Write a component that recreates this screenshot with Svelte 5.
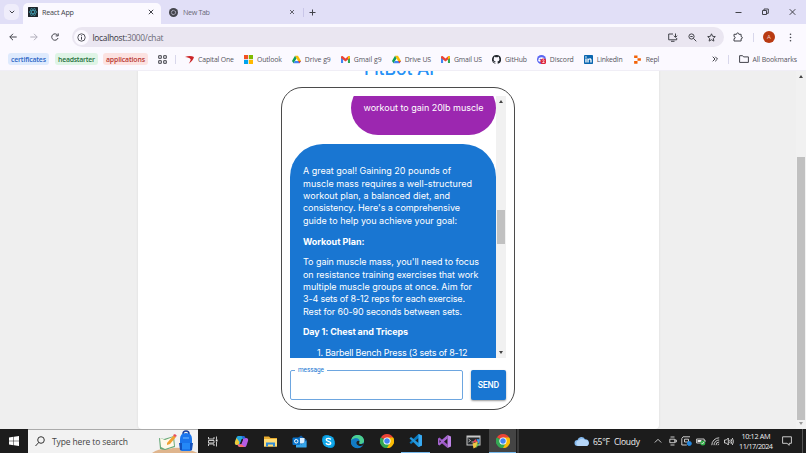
<script>
  // Spreads a label's letters so that it occupies the given width.
  function fit(node, width) {
    const natural = node.getBoundingClientRect().width;
    const count = node.textContent.length - 1;
    if (count > 0) node.style.letterSpacing = `${(width - natural) / count}px`;
    node.style.marginRight = `${-(width - natural) / count}px`;
  }

  const groups = [
    { name: 'certificates', w: 35, box: 41, gap: 6, kind: 'blue' },
    { name: 'headstarter', w: 37, box: 43, gap: 5, kind: 'green' },
    { name: 'applications', w: 39, box: 45, gap: 10, kind: 'red' }
  ];

  const bookmarks = [
    { icon: 'capital', name: 'Capital One', w: 36 },
    { icon: 'outlook', name: 'Outlook', w: 25 },
    { icon: 'drive', name: 'Drive g9', w: 26 },
    { icon: 'gmail', name: 'Gmail g9', w: 28 },
    { icon: 'drive', name: 'Drive US', w: 26.5 },
    { icon: 'gmail', name: 'Gmail US', w: 28 },
    { icon: 'github', name: 'GitHub', w: 22 },
    { icon: 'discord', name: 'Discord', w: 24 },
    { icon: 'linkedin', name: 'LinkedIn', w: 26 },
    { icon: 'repl', name: 'Repl', w: 13.5 }
  ];

  const blocks = [
    { lines: [
      ['A great goal! Gaining 20 pounds of', 148],
      ['muscle mass requires a well-structured', 169],
      ['workout plan, a balanced diet, and', 147],
      ["consistency. Here's a comprehensive", 157],
      ['guide to help you achieve your goal:', 154]
    ] },
    { bold: true, lines: [['Workout Plan:', 61.5]] },
    { lines: [
      ["To gain muscle mass, you'll need to focus", 176],
      ['on resistance training exercises that work', 175.5],
      ['multiple muscle groups at once. Aim for', 169],
      ['3-4 sets of 8-12 reps for each exercise.', 162],
      ['Rest for 60-90 seconds between sets.', 159]
    ] },
    { bold: true, lines: [['Day 1: Chest and Triceps', 105]] },
    { list: true, lines: [['1. Barbell Bench Press (3 sets of 8-12', 150.5]] }
  ];

  const apps = ['taskview', 'copilot', 'explorer', 'mail', 'skype', 'edge', 'chrome', 'code', 'vs', 'terminal', 'chrome'];
</script>

{#snippet chrome(size)}
  <svg width={size} height={size} viewBox="0 0 24 24">
    <path d="M12 12 1.6 6A12 12 0 0 1 22.4 6z" fill="#ea4335" />
    <path d="M12 12 22.4 6A12 12 0 0 1 12 24z" fill="#fbbc04" />
    <path d="M12 12v12A12 12 0 0 1 1.6 6z" fill="#34a853" />
    <path d="M12 6h10.4A12 12 0 0 1 12 24l5.2-9z" fill="#fbbc04" />
    <path d="M1.6 6 6.8 15 12 18l5.2-3L12 24A12 12 0 0 1 1.6 6z" fill="#34a853" />
    <circle cx="12" cy="12" r="6.2" fill="#fff" />
    <circle cx="12" cy="12" r="4.7" fill="#4285f4" />
  </svg>
{/snippet}

{#snippet mark(icon)}
  <svg width="9" height="9" viewBox="0 0 24 24">
    {#if icon === 'capital'}
      <path d="M0 5c8-3 18-3 24 0-2 8-7 13-14 18 3-5 5-9 5-12C12 7 7 6 0 5z" fill="#cc2427" />
    {:else if icon === 'outlook'}
      <path d="M0 0h11v11H0z" fill="#f25022" /><path d="M13 0h11v11H13z" fill="#7fba00" />
      <path d="M0 13h11v11H0z" fill="#00a4ef" /><path d="M13 13h11v11H13z" fill="#ffb900" />
    {:else if icon === 'drive'}
      <path d="M8 2h8l8 14h-8z" fill="#fbbc04" /><path d="M8 2l4 7L4 22 0 16z" fill="#0f9d58" />
      <path d="M8 16h16l-4 6H4z" fill="#4285f4" /><path d="M16 16h8l-4 6z" fill="#ea4335" />
    {:else if icon === 'gmail'}
      <path d="M0 5v16h5.5V10z" fill="#4285f4" /><path d="M24 5v16h-5.5V10z" fill="#34a853" />
      <path d="M0 5c0-3 3-3 5-1.500l7 5.500 7-5.500C21 2 24 2 24 5v3l-12 9L0 8z" fill="#ea4335" />
      <path d="M18.500 4c3-2.500 5.500-1 5.500 1v3l-5.500 4z" fill="#fbbc04" />
    {:else if icon === 'github'}
      <path fill="#24292f" d="M12 0a12 12 0 0 0-3.800 23.400c.6.1.8-.3.8-.6v-2c-3.300.7-4-1.600-4-1.600-.6-1.400-1.300-1.800-1.300-1.800-1.100-.7.1-.7.1-.7 1.200.1 1.800 1.200 1.800 1.200 1.100 1.800 2.800 1.300 3.500 1 .1-.8.4-1.300.8-1.600-2.700-.3-5.500-1.300-5.500-6 0-1.200.5-2.300 1.300-3.100-.2-.4-.6-1.600.1-3.200 0 0 1-.3 3.300 1.200a11.500 11.500 0 0 1 6 0c2.300-1.500 3.300-1.200 3.300-1.200.7 1.600.2 2.800.1 3.200.8.8 1.300 1.900 1.300 3.200 0 4.600-2.800 5.600-5.500 5.900.5.400.9 1.100.9 2.200v3.300c0 .3.200.7.800.6A12 12 0 0 0 12 0z" />
    {:else if icon === 'discord'}
      <circle cx="12" cy="12" r="12" fill="#5865f2" />
      <path d="M5 8q7-4 14 0l2 8q-9 5-18 0z" fill="#fff" />
      <circle cx="9" cy="12" r="2" fill="#5865f2" />
      <circle cx="17" cy="17" r="8" fill="#df263b" />
      <path d="M14.500 14q2.500-3 4.500 0 0 3-4 6h5" fill="none" stroke="#fff" stroke-width="2" />
    {:else if icon === 'linkedin'}
      <rect width="24" height="24" rx="2" fill="#0a66b0" />
      <path d="M3.500 9h3.500v11H3.500zM9 9h3.400v1.500c2-3 8-2.500 8 3.500v6h-3.500v-5.500c0-4-4.400-3.500-4.400 0V20H9z" fill="#fff" />
      <circle cx="5.200" cy="5.300" r="2.100" fill="#fff" />
    {:else}
      <path d="M3 1h9v7H3zM12 8.500h9v7h-9zM3 16h9v7H3z" fill="#f26207" />
    {/if}
  </svg>
{/snippet}

{#snippet app(name)}
  {#if name === 'chrome'}
    {@render chrome(14)}
  {:else}
    <svg width="15" height="15" viewBox="0 0 30 30">
      {#if name === 'taskview'}
        <path d="M7 6v4h11V6M7 24v-4h11v4M7 13h11v5H7zM23 5v6m0 5v9" fill="none" stroke="#ddd" stroke-width="1.800" />
        <path d="M21.500 11h3.500v4h-3.500z" fill="#eee" />
      {:else if name === 'copilot'}
        <path d="M9 4h9c3 0 4 2 5 5h-4c-3 0-4 2-5 5l-3 8H6c-4 0-5-3-4-6l3-9c1-2 2-3 4-3z" fill="#25a6dc" />
        <path d="M5 8C3 13 1 17 2 20c1 2 4 2 7 2l2-6z" fill="#eecb38" />
        <path d="M21 26h-9c-3 0-4-2-5-5h4c3 0 4-2 5-5l3-8h5c4 0 5 3 4 6l-3 9c-1 2-2 3-4 3z" fill="#b55ce4" />
        <path d="M7 21h5c4 0 5 1 9 5h-9c-3 0-4-2-5-5z" fill="#f56b67" />
        <path d="M15 4h3c3 0 4 2 5 5h-5z" fill="#245edb" />
        <path d="M12.500 19.500l3-9h2.500l-3 9z" fill="#1c1c1c" />
      {:else if name === 'explorer'}
        <path d="M2 5h10l3 3h13v17H2z" fill="#e9ac2e" /><path d="M2 10h26v15H2z" fill="#ffdc76" />
        <path d="M6 17h18v8h-4v-4H10v4H6z" fill="#318bd5" />
      {:else if name === 'mail'}
        <path d="M9 10l9-7 11 9v14H9z" fill="#0f5fab" /><path d="M12 8h13v11H12z" fill="#d9efff" />
        <path d="M8 14l11 7 10-8v14H8z" fill="#35a4e8" /><rect x="1" y="7" width="15" height="15" rx="2" fill="#0873ca" />
        <circle cx="8.500" cy="14.500" r="3.500" fill="none" stroke="#fff" stroke-width="2" />
      {:else if name === 'skype'}
        <circle cx="11" cy="11" r="9" fill="#0796d9" /><circle cx="19" cy="19" r="9" fill="#0796d9" /><circle cx="15" cy="15" r="12" fill="#12a8e9" />
        <path d="M19.500 11c-2-3-9-3-9 .5 0 4 9 2.500 9 6.500s-8 4-9.500 0" fill="none" stroke="#fff" stroke-width="2.800" />
      {:else if name === 'edge'}
        <circle cx="15" cy="15" r="13" fill="#1686d2" />
        <path d="M2 14C3 5 10 1 17 2c8 1 12 8 11 13-1 4-6 6-10 4-1-1 1-2 1-4 0-8-12-9-17-1z" fill="#4ccf91" />
        <path d="M2 14c5-8 17-7 17 1-4-4-8 0-6 5 2 6 9 6 13 3-4 5-11 7-17 4-5-2-8-7-7-13z" fill="#127bc5" />
        <path d="M13 16c2-3 5-3 6-1 0 2-2 3-1 4 3 2 7 1 9-1 0 3-2 5-5 6-7 0-10-4-9-8z" fill="#202020" />
      {:else if name === 'code'}
        <path d="M21 2l7 3v20l-7 3L15 22 21 20V10L6 22l-3-3z" fill="#087abf" />
        <path d="M3 11l3-3 15 12v8z" fill="#2497dc" /><path d="M21 2l7 3v20l-7 3z" fill="#38aaf1" />
      {:else if name === 'vs'}
        <path d="M2 9l3-2 16 14v7L2 12z" fill="#9b57c4" /><path d="M21 2v7L5 23l-3-2V9l4 6z" fill="#a866d4" /><path d="M21 2l7 3v20l-7 3z" fill="#c083e8" />
        <path d="M5 12v6l3-3z" fill="#202020" />
      {:else if name === 'terminal'}
        <path d="M1 3h28v20H1z" fill="#c9c9c9" /><path d="M3 7h24v14H3z" fill="#272b2e" />
        <path d="M5 10l4 3-4 3M11 16h5" fill="none" stroke="#ddd" stroke-width="1.500" />
        <path d="M13 17l6-7 4 6z" fill="#ee4354" /><path d="M21 10l7 1-3 9z" fill="#3f9be9" /><path d="M13 19l11-4-3 11-6 3z" fill="#f0c544" /><path d="M22 19l5 1-7 8z" fill="#66c157" />
      {/if}
    </svg>
  {/if}
{/snippet}

<div class="screen">
  <header>
    <div class="tabs">
      <div class="chev"><svg width="6" height="6" viewBox="0 0 6 6"><path d="M.8 1.800 3 4l2.200-2.200" /></svg></div>
      <div class="tab active">
        <svg class="fav" width="10" height="10" viewBox="0 0 20 20"><rect width="20" height="20" rx="1" fill="#20262b" /><g fill="none" stroke="#46a9bd" stroke-width="1.200"><ellipse cx="10" cy="10" rx="8" ry="3" /><ellipse cx="10" cy="10" rx="8" ry="3" transform="rotate(60 10 10)" /><ellipse cx="10" cy="10" rx="8" ry="3" transform="rotate(120 10 10)" /></g></svg>
        <span class="name"><span use:fit={32}>React App</span></span>
        <svg width="6" height="6" viewBox="0 0 6 6"><path d="M.8.8l4.400 4.400M5.200.8.8 5.200" /></svg>
      </div>
      <div class="tab second">
        <svg class="fav" width="9" height="9" viewBox="0 0 18 18"><circle cx="9" cy="9" r="9" fill="#45464d" /><circle cx="9" cy="9" r="4.200" fill="none" stroke="#e1dff7" stroke-width="1.400" /><circle cx="9" cy="9" r="2.400" fill="#45464d" /><path d="M9 4.800h8M5.300 11 2 4.800M12.600 11 8.500 18" stroke="#e1dff7" stroke-width="1.200" /></svg>
        <span class="name"><span use:fit={27}>New Tab</span></span>
        <svg class="thin" width="6" height="6" viewBox="0 0 6 6"><path d="M1 1l4 4M5 1 1 5" /></svg>
      </div>
      <i class="rule"></i>
      <svg class="plus" width="7" height="7" viewBox="0 0 7 7"><path d="M3.500.5v6M.5 3.500h6" /></svg>
      <div class="window">
        <svg width="7" height="8" viewBox="0 0 7 8"><path d="M.5 4.500h6" /></svg>
        <svg width="7" height="8" viewBox="0 0 7 8"><path d="M.5 2.500h4v4h-4zM2 2.500V1h4.300v4.300H4.500" /></svg>
        <svg width="7" height="8" viewBox="0 0 7 8"><path d="M.7 1.200l5.600 5.600M6.300 1.200.7 6.800" /></svg>
      </div>
    </div>

    <div class="toolbar">
      <svg width="8" height="8" viewBox="0 0 8 8"><path d="M7.700 4H.8M4 .8.8 4 4 7.200" /></svg>
      <svg class="dim" width="8" height="8" viewBox="0 0 8 8"><path d="M.3 4h6.900M4 .8 7.200 4 4 7.200" /></svg>
      <svg width="8" height="8" viewBox="0 0 8 8"><path d="M6.700 2.400A3.200 3.200 0 1 0 7 5M7.200.4v2.500H4.700" /></svg>
      <div class="omni">
        <div class="info"><svg width="9" height="9" viewBox="0 0 9 9"><circle cx="4.500" cy="4.500" r="3.700" /><path d="M4.500 4v2.700M4.500 2.300v1" /></svg></div>
        <span class="url"><span use:fit={71}><b>localhost:</b>3000/chat</span></span>
        <div class="actions">
          <svg width="10" height="9" viewBox="0 0 10 9"><path d="M5 1H.7v5.800h8V5M3 8.300h3.500M7.500.5v3.700M5.800 2.700l1.700 1.700 1.700-1.700" /></svg>
          <svg width="9" height="9" viewBox="0 0 9 9"><circle cx="3.500" cy="3.500" r="2.600" /><path d="M5.400 5.400 8.300 8.300M2.300 3.500h2.400" /></svg>
          <svg width="9" height="9" viewBox="0 0 9 9"><path d="M4.500.8l1.100 2.500 2.700.3-2 1.800.6 2.700-2.400-1.400-2.400 1.400.6-2.700-2-1.800 2.700-.3z" /></svg>
        </div>
      </div>
      <svg class="ext" width="10" height="10" viewBox="0 0 10 10"><path d="M1 2.300h2.500c0-1.900 2.400-1.900 2.400 0h2.200v2.300c1.700 0 1.700 2.200 0 2.200v2.200H1V6.700c1.600 0 1.600-2.200 0-2.200z" /></svg>
      <i class="rule"></i>
      <div class="avatar">A</div>
      <svg class="dots" width="3" height="9" viewBox="0 0 3 9"><circle cx="1.500" cy="1.200" r=".8" /><circle cx="1.500" cy="4.500" r=".8" /><circle cx="1.500" cy="7.800" r=".8" /></svg>
    </div>

    <div class="bookmarks">
      {#each groups as g}
        <div class="chip {g.kind}" style="width:{g.box}px;margin-right:{g.gap}px"><span use:fit={g.w}>{g.name}</span></div>
      {/each}
      <svg width="9" height="9" viewBox="0 0 9 9"><path d="M.7.7h2.600v2.600H.7zM5.700.7h2.600v2.600H5.700zM.7 5.700h2.600v2.600H.7zM5.700 5.700h2.600v2.600H5.700z" /></svg>
      <i class="rule"></i>
      {#each bookmarks as b}
        <div class="mark" style="width:{b.w + 23}px">{@render mark(b.icon)}<span use:fit={b.w}>{b.name}</span></div>
      {/each}
      <div class="all">
        <svg width="6" height="6" viewBox="0 0 6 6"><path d="M.7.7 3 3 .7 5.300M3.200.7 5.500 3 3.200 5.300" /></svg>
        <i class="rule"></i>
        <svg class="folder" width="10" height="8" viewBox="0 0 10 8"><path d="M.6.7h3l1 1.200h4.800v5.500H.6z" /></svg>
        <span use:fit={44.5}>All Bookmarks</span>
      </div>
    </div>
  </header>

  <main>
    <section class="sheet">
      <h1><span use:fit={70}>FitBot AI</span></h1>
      <div class="frame">
        <div class="history">
          <div class="messages">
            <div class="bubble user"><span use:fit={120}>workout to gain 20lb muscle</span></div>
            <div class="bubble bot">
              {#each blocks as block}
                <p class:bold={block.bold} class:list={block.list}>
                  {#each block.lines as [text, w]}<span class="line"><span use:fit={w}>{text}</span></span>{/each}
                </p>
              {/each}
            </div>
          </div>
          <div class="scroll"><i class="up"></i><div class="thumb"></div><i class="down"></i></div>
        </div>
        <div class="compose">
          <fieldset><legend><span use:fit={26}>message</span></legend></fieldset>
          <button><span use:fit={21.5}>SEND</span></button>
        </div>
      </div>
    </section>
    <div class="scroll page"><i class="up"></i><div class="thumb"></div><i class="down"></i></div>
  </main>

  <footer>
    <div class="start"><svg width="10" height="10" viewBox="0 0 10 10"><path d="M0 1.400 4.500.8v3.900H0zM5 .7l5-.7v4.700H5zM0 5.200h4.500v4L0 8.600zM5 5.200h5V10l-5-.7z" /></svg></div>
    <div class="search">
      <svg width="10" height="11" viewBox="0 0 10 11"><circle cx="6" cy="4" r="3.300" /><path d="M3.700 6.500.5 10" /></svg>
      <span use:fit={76}>Type here to search</span>
      <svg class="art" width="46" height="23" viewBox="0 0 46 23">
        <path d="M0 23q8-5 17-4 11-4 29 4z" fill="#dfb58d" />
        <path d="M7 8l5 1 10-3 1 11-10 3-5-1z" fill="#66a878" /><path d="M8 8l5 2 8-3 1 9-9 3-4-2z" fill="#fff9e9" />
        <path d="M15 13l7-8 2 2-6 7-3 1z" fill="#f0a132" /><path d="M21 5l2-1 2 2-2 1z" fill="#e84d5f" />
        <path d="M31 4q0-3 3-3t3 3" fill="none" stroke="#163e9d" stroke-width="1.500" />
        <path d="M28 9q0-6 6-6t6 6v10q0 2-2 2h-8q-2 0-2-2z" fill="#1a75ed" /><path d="M27 13h3v7h-2zM38 13h3l-1 7h-2z" fill="#1352bd" />
        <path d="M30 13h8v6h-8z" fill="#2488f7" /><path d="M31 8h6" stroke="#75bcff" />
      </svg>
    </div>
    <div class="apps">
      {#each apps as a, i}
        <div class="app" class:running={a === 'code'} class:current={i === 10}>{@render app(a)}</div>
      {/each}
      <i class="stack"></i>
    </div>
    <div class="tray">
      <svg width="16" height="11" viewBox="0 0 16 11"><path d="M3.500 10a3 3 0 0 1 0-6 4 4 0 0 1 7.500-.8A3.500 3.500 0 0 1 12.500 10z" fill="#83b9ef" /><path d="M4 10a3 3 0 0 1 .8-5.700A4 4 0 0 1 11 4a3.100 3.100 0 0 1 1.500 6z" fill="#b5d6f8" /></svg>
      <span class="temp"><span use:fit={17}>65°F</span></span>
      <span class="sky"><span use:fit={26}>Cloudy</span></span>
      <svg class="line-icon caret" width="8" height="6" viewBox="0 0 8 6"><path d="M.8 4.500 4 1.300l3.200 3.200" /></svg>
      <svg class="line-icon meet" width="8" height="10" viewBox="0 0 8 10"><path d="M1.500 1h4M.8 3.200h5v3.500h-5zM5.800 4h1.500v2H5.800M1.500 9h4" /></svg>
      <svg class="line-icon sync" width="11" height="10" viewBox="0 0 11 10"><path d="M9 .8H2L.8 2.500V9h5M3.500 3.200h4V6h-4z" /><circle cx="8.300" cy="7.500" r="2" fill="#2387df" stroke="#2387df" /></svg>
      <svg class="line-icon battery" width="10" height="9" viewBox="0 0 10 9"><path d="M.6 2h7.600v4H.6zM9 3v2" /><path class="charge" d="M1.500 3h4v2h-4z" /><circle cx="6.800" cy="6" r="2.500" fill="#34b04a" /><path d="M5.700 6l.8 1 1.400-2" /></svg>
      <svg class="line-icon wifi" width="9" height="9" viewBox="0 0 9 9"><path d="M.8 8.200A7.500 7.500 0 0 1 8.200.8M3 8.200A5.200 5.200 0 0 1 8.200 3M5 8.200a3.200 3.200 0 0 1 3.200-3.200M7 8.200A1.200 1.200 0 0 1 8.200 7" /></svg>
      <svg class="line-icon" width="10" height="9" viewBox="0 0 10 9"><path d="M.5 3h1.800L4.300 1v7l-2-2H.5zM5.700 3q1 1.500 0 3M7 2q1.800 2.500 0 5M8.300 1q2.500 3.500 0 7" /></svg>
      <div class="clock"><span use:fit={29}>10:12 AM</span><span use:fit={34}>11/17/2024</span></div>
      <svg class="line-icon" width="10" height="10" viewBox="0 0 10 10"><path d="M.6.8h8.800v6.500H7.200v2L5 7.300H.6z" /></svg>
      <i class="peek"></i>
    </div>
  </footer>
</div>

<style>
  :global(body) { margin: 0; overflow: hidden; }
  .screen { width: 806px; height: 453px; display: flex; flex-direction: column; font-family: 'Open Sans', 'Noto Sans', sans-serif; color: #42434a; overflow: hidden; }
  .screen * { box-sizing: border-box; }
  span { display: inline-block; white-space: nowrap; }
  svg { display: block; flex: none; }
  header svg > path:not([fill]), .toolbar svg circle { fill: none; stroke: #42434a; stroke-width: 1; }
  header { height: 70.500px; flex: none; background: #fbf9ff; border-bottom: 1px solid #f0eef6; position: relative; z-index: 1; }
  .rule { width: 1px; height: 9px; background: #d8d7eb; flex: none; }

  .tabs { height: 24px; background: #e1dff7; display: flex; align-items: center; font-size: 7.200px; }
  .chev { width: 15px; height: 16px; margin-left: 4px; background: #efedfb; border-radius: 5px; display: flex; align-items: center; justify-content: center; }
  .tab { height: 24px; display: flex; align-items: center; }
  .tab .name { flex: 1; }
  .active { width: 138px; height: 21px; margin: 3px 0 0 4px; padding: 0 7px 3px 5px; background: #fbf9ff; border-radius: 5px 5px 0 0; }
  .fav { margin-right: 4px; }
  .second { width: 127px; margin-left: 8px; padding-right: 1px; color: #6b6a77; }
  .tabs .thin path { stroke-width: .8; }
  .second .fav { margin-right: 5px; }
  .tabs > .rule { margin-left: 7px; background: #c9c6e8; }
  .plus { margin-left: 5px; }
  .window { display: flex; gap: 20px; margin-left: auto; padding-right: 10px; }

  .toolbar { height: 26px; display: flex; align-items: center; padding-left: 9px; gap: 13px; }
  .toolbar svg.dim path { stroke: #b0aeba; }
  .omni { width: 652px; height: 20px; margin: 0 -1.500px 0 -.5px; flex: none; border-radius: 10px; background: #eae6f1; display: flex; align-items: center; }
  .info { width: 15px; height: 15px; margin-left: 2px; border-radius: 50%; background: #fbf9ff; display: flex; align-items: center; justify-content: center; }
  .info svg path, .info svg circle { stroke-width: .9; }
  .url { margin-left: 4px; font-size: 8.300px; color: #6b6975; }
  .url b { font-weight: 400; color: #34343c; }
  .actions { display: flex; gap: 10px; margin-left: auto; padding-right: 8px; }
  .ext { margin-left: -2px; }
  .toolbar > .rule { margin-left: -3px; }
  .avatar { width: 12px; height: 12px; margin-left: -4px; border-radius: 50%; background: #b93a12; color: #f6d6cb; font-size: 6px; line-height: 12px; text-align: center; flex: none; }
  .toolbar .dots circle { fill: #42434a; stroke: none; }
  .dots { margin-left: 1px; }

  .bookmarks { height: 18px; display: flex; align-items: center; padding-left: 8px; font-size: 6.900px; color: #55545d; }
  .chip { height: 12px; border-radius: 3px; display: flex; align-items: center; justify-content: center; flex: none; font-weight: 600; }
  .blue { background: #deeafd; color: #2d66c6; }
  .green { background: #dff4e6; color: #27713d; }
  .red { background: #fce2e1; color: #b83430; }
  .bookmarks > .rule { margin: 0 9px 0 8px; }
  .mark { display: flex; align-items: center; gap: 4px; flex: none; margin-right: -.1px; }
  .all { margin-left: auto; padding-right: 9px; display: flex; align-items: center; }
  .all .rule { margin: 0 10px; }
  .folder { margin-right: 4px; }

  main { height: 359px; flex: none; background: #efefef; display: flex; margin-top: -.5px; }
  .sheet { width: 521px; height: 359px; margin-left: 138px; background: #fff; border-radius: 0 0 4px 4px; box-shadow: 0 0 2px #d5d5d5; }
  h1 { height: 26px; margin: -9px 0 0; display: flex; justify-content: center; font: 500 17.500px/16px Inter, sans-serif; color: #2490f5; }
  h1 span { height: 16px; margin-left: 1px; }
  .frame { width: 234px; height: 323px; margin-left: 143px; border: 1px solid #4b4b4b; border-radius: 21px; padding: 8px 8px 0; }
  .history { display: flex; height: 262px; overflow: hidden; }
  .messages { width: 206px; display: flex; flex-direction: column; font: 400 9px/12.400px Inter, sans-serif; color: #fff; }
  .bubble { flex: none; }
  .user { align-self: flex-end; width: 145px; height: 54px; margin-top: -15px; padding: 20.500px 12.500px; border-radius: 27px; background: #9c27b0; }
  .bot { width: 206px; height: 500px; margin-top: 9px; padding: 21.300px 13px; border-radius: 33px; background: #1976d2; }
  p { margin: 0 0 8.300px; }
  .line { display: block; height: 12.400px; }
  .bold { font-weight: 700; }
  .list { padding-left: 14px; }
  .scroll { width: 10px; background: #f1f1f1; display: flex; flex-direction: column; align-items: center; flex: none; }
  .history .thumb { width: 8px; height: 34px; margin-top: 107px; background: #c1c1c1; }
  .up { border: 2.500px solid transparent; border-top: 0; border-bottom: 3px solid #444; margin-top: 4px; }
  .down { border: 2.500px solid transparent; border-bottom: 0; border-top: 3px solid #444; margin: auto 0 4px; }
  .page { margin-left: auto; height: 359px; }
  .page .thumb { width: 8px; height: 263px; margin-top: 79px; background: #c0c0c0; }
  .page .up { margin-top: 5px; }
  .page .down { border-top-color: #999; }

  .compose { display: flex; align-items: flex-end; gap: 8px; margin-top: 8px; }
  fieldset { width: 173px; height: 34px; margin: 0; padding: 0 0 0 4px; border: 1px solid #6da6e0; border-radius: 2px; }
  legend { padding: 0 3px; height: 9px; font: 400 6.500px/9px Roboto, sans-serif; color: #1976d2; }
  button { width: 35px; height: 30px; padding: 0; border: 0; border-radius: 2px; background: #1976d2; color: #fff; font: 500 8.700px Roboto, sans-serif; box-shadow: 0 1px 2px rgba(0, 0, 0, .4); }

  footer { height: 24px; flex: none; background: #1c1c1c; display: flex; align-items: stretch; position: relative; z-index: 1; }
  .start { width: 28px; display: flex; align-items: center; justify-content: center; }
  .start path { fill: #fff; }
  .search { width: 170px; background: #f2f2f2; border-top: 1px solid #aaa; display: flex; align-items: center; padding: 0 0 0 7px; font-size: 8.500px; color: #444; }
  .search > svg:first-child { margin-right: 7px; }
  .search > svg:first-child path, .search > svg:first-child circle { fill: none; stroke: #333; stroke-width: 1; }
  .art { margin-left: auto; }
  .apps { display: flex; }
  .app { width: 29px; display: flex; align-items: center; justify-content: center; }
  .running { border-bottom: 1px solid #76b9ed; }
  .current { width: 27px; margin-left: 1px; background: #444; border-bottom: 1px solid #76b9ed; }
  .stack { width: 2px; margin-left: 1px; background: #3a3a3a; }
  .tray { margin-left: auto; display: flex; align-items: center; color: #eee; font-size: 8.500px; }
  .temp { width: 17px; margin-left: 3px; }
  .sky { width: 26px; margin: 0 14px 0 4px; }
  .line-icon path { fill: none; stroke: #ddd; stroke-width: .9; }
  .line-icon .charge { fill: #eee; stroke: none; }
  .meet { margin-left: 7px; }
  .sync { margin-left: 4px; }
  .battery { margin-left: 4px; }
  .wifi { margin: 0 4px 0 5px; }
  .clock { width: 34px; margin: 0 9px 0 5px; display: flex; flex-direction: column; align-items: center; font-size: 7.300px; line-height: 10.500px; }
  .peek { width: 1px; height: 24px; margin: 0 3px 0 10px; background: #555; }
</style>
